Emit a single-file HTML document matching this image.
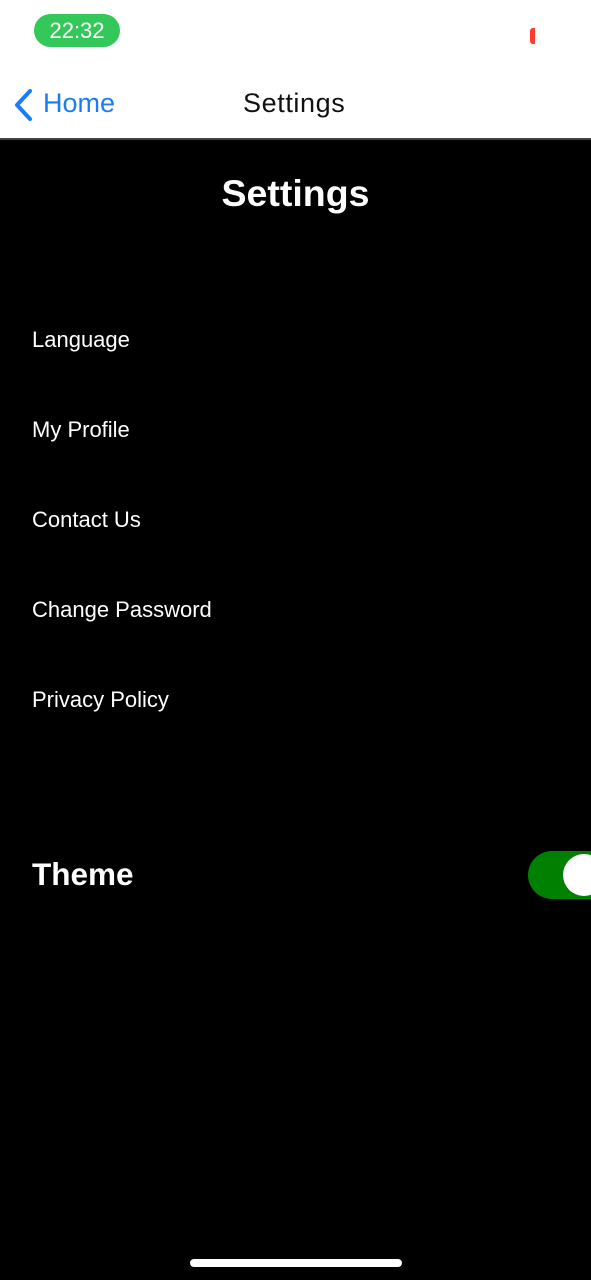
<!DOCTYPE html>
<html><head><style>
body{margin:0;width:591px;height:1280px;overflow:hidden;background:#000;font-family:"Liberation Sans",sans-serif;position:relative}
.top{position:absolute;left:0;top:0;width:591px;height:138px;background:#fff;border-bottom:2px solid #444}
.t{position:absolute;white-space:nowrap}
.item{position:absolute;left:32px;color:#fff;font-size:22px}
</style></head><body>
<div class="top">
<div class="t" style="left:34px;top:14px;width:86px;height:33px;border-radius:17px;background:#34c759;color:#fff;font-size:22px;line-height:33px;text-align:center">22:32</div>
<div class="t" style="left:530px;top:28px;width:5px;height:16px;background:#ff3b30;border-radius:3px 0 0 3px"></div>
<svg class="t" style="left:12px;top:88px" width="22" height="34" viewBox="0 0 22 34"><path d="M18 3 L5 17 L18 31" stroke="#1a7cf5" stroke-width="4" fill="none" stroke-linecap="round" stroke-linejoin="round"/></svg>
<div class="t" style="left:43px;top:88px;font-size:27px;color:#1a7cf5">Home</div>
<div class="t" style="left:243px;top:88px;font-size:27px;letter-spacing:0.6px;color:#111">Settings</div>
</div>
<div class="t" style="left:0;width:591px;text-align:center;top:172px;font-size:37.5px;font-weight:bold;color:#fff">Settings</div>
<div class="item" style="top:327px">Language</div>
<div class="item" style="top:417px">My Profile</div>
<div class="item" style="top:507px">Contact Us</div>
<div class="item" style="top:597px">Change Password</div>
<div class="item" style="top:687px">Privacy Policy</div>
<div class="t" style="left:32px;top:856px;font-size:31.5px;font-weight:bold;color:#fff">Theme</div>
<div class="t" style="left:528px;top:851px;width:100px;height:48px;border-radius:24px;background:#008000"></div>
<div class="t" style="left:563px;top:854px;width:42px;height:42px;border-radius:50%;background:#fff"></div>
<div class="t" style="left:190px;top:1259px;width:212px;height:8px;border-radius:4px;background:#fff"></div>
</body></html>
